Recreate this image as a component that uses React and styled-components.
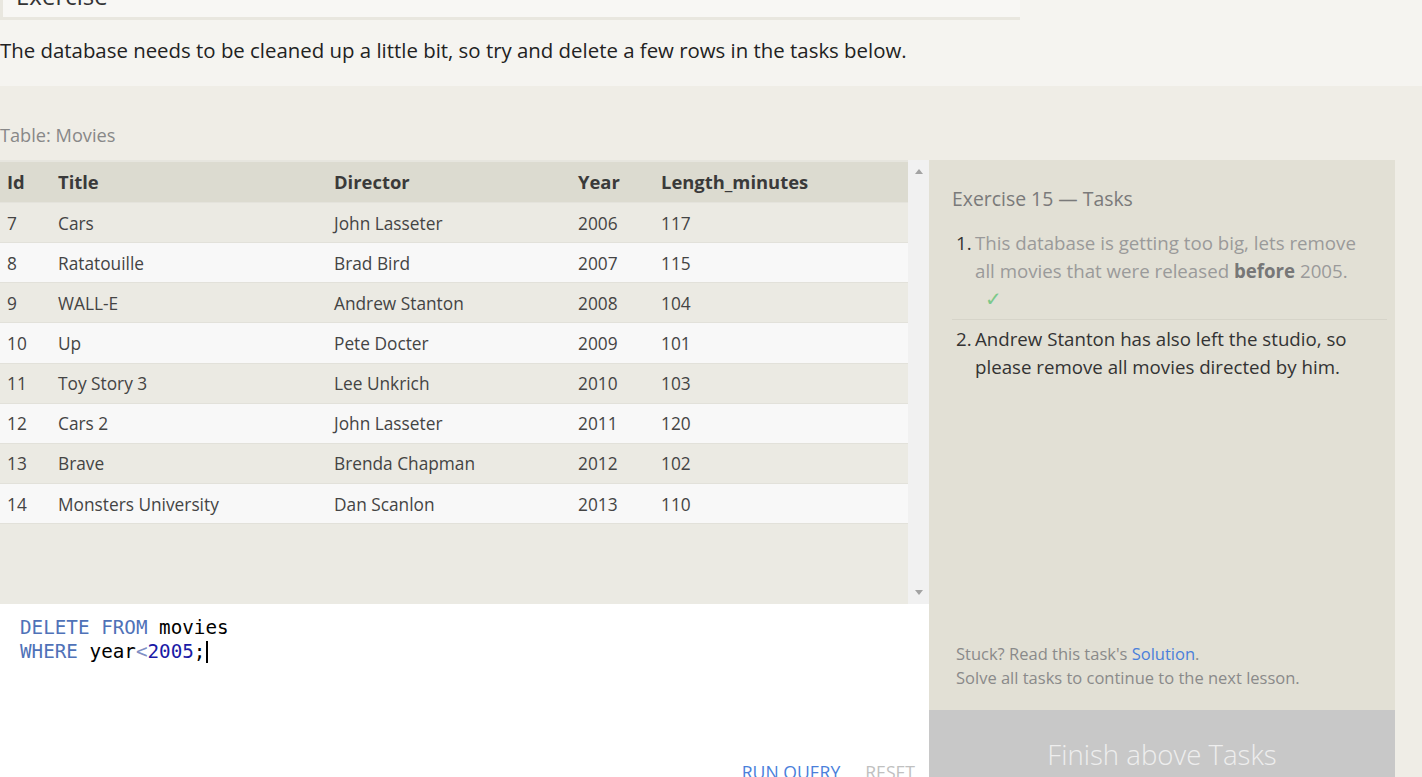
import React from 'react';
import styled, { createGlobalStyle } from 'styled-components';

const GlobalStyle = createGlobalStyle`
  html, body {
    margin: 0;
    padding: 0;
    background: #f5f4f0;
    font-family: "Open Sans", "Noto Sans", sans-serif;
    color: #333;
    overflow: hidden;
  }
`;

const colors = {
  page: '#f5f4f0',
  section: '#efede6',
  header: '#dcdbd0',
  rowOdd: '#ebeae3',
  rowEven: '#f8f8f8',
  panel: '#e2e0d5',
  link: '#4a7fdb',
  muted: '#888',
};

const Page = styled.div`
  width: 1422px;
  height: 777px;
  overflow: hidden;
`;

const ExerciseHeader = styled.div`
  width: 1017px;
  height: 17px;
  overflow: hidden;
  background: #f8f7f4;
  border-left: 3px solid #e9e7df;
  border-bottom: 3px solid #e9e7df;
  display: flex;
  align-items: flex-end;
`;

const ExerciseTitle = styled.h2`
  margin: 0 0 6px 13px;
  font-weight: 400;
  font-size: 24px;
  line-height: 30px;
  color: #333;
`;

const Intro = styled.p`
  margin: 0;
  height: 66px;
  display: flex;
  align-items: center;
  font-size: 20.4px;
  color: #222;
  padding-bottom: 6px;
  box-sizing: border-box;
`;

const Workspace = styled.section`
  background: ${colors.section};
  padding-top: 37px;
`;

const TableLabel = styled.div`
  font-size: 18.2px;
  line-height: 24px;
  color: ${colors.muted};
  margin-bottom: 13px;
`;

const Panels = styled.div`
  display: flex;
  align-items: stretch;
`;

const LeftColumn = styled.div`
  width: 929px;
  display: flex;
  flex-direction: column;
`;

const TableFrame = styled.div`
  height: 444px;
  display: flex;
  background: ${colors.rowOdd};
`;

const Table = styled.table`
  width: 908px;
  height: fit-content;
  border-collapse: collapse;
  border-top: 2px solid #e6e5de;
  font-size: 17.3px;
  color: #444;
`;

const HeadCell = styled.th`
  text-align: left;
  font-weight: 700;
  font-size: 18.4px;
  color: #3a3a3a;
  background: ${colors.header};
  height: 38px;
  padding: 0 0 2px 7px;
  width: ${(p) => p.$w || 'auto'};
  border-bottom: 1px solid #e4e3dc;
`;

const Row = styled.tr`
  background: ${(p) => (p.$even ? colors.rowEven : colors.rowOdd)};
  border-bottom: 1px solid #e2e1da;
`;

const Cell = styled.td`
  height: 38.15px;
  padding: 1px 0 0 7px;
`;

const Scrollbar = styled.div`
  width: 21px;
  background: #f1f1f1;
  display: flex;
  flex-direction: column;
  justify-content: space-between;
  align-items: center;
  padding: 9px 0;
  box-sizing: border-box;
`;

const Arrow = styled.span`
  width: 0;
  height: 0;
  border-left: 4px solid transparent;
  border-right: 4px solid transparent;
  ${(p) =>
    p.$down
      ? 'border-top: 5px solid #a3a3a3;'
      : 'border-bottom: 5px solid #a3a3a3;'}
`;

const Editor = styled.div`
  background: #fff;
  height: 220px;
  display: flex;
  flex-direction: column;
`;

const Code = styled.pre`
  margin: 0;
  padding: 12px 20px 10px;
  height: 130px;
  font-family: "DejaVu Sans Mono", "Liberation Mono", monospace;
  font-size: 19.25px;
  line-height: 24px;
  color: #000;
`;

const Token = styled.span`
  color: ${(p) => p.$c};
`;

const Cursor = styled.span`
  display: inline-block;
  width: 2px;
  height: 22px;
  background: #000;
  vertical-align: -5px;
  margin-left: 1px;
`;

const EditorActions = styled.div`
  display: flex;
  justify-content: flex-end;
  gap: 25px;
  padding-right: 14px;
  margin-top: 4px;
`;

const ActionButton = styled.button`
  border: none;
  background: none;
  padding: 0;
  font-family: "Open Sans", "Noto Sans", sans-serif;
  font-size: 17.6px;
  color: ${(p) => (p.$disabled ? '#c0c0c0' : '#4a7fdb')};
  cursor: pointer;
`;

const TaskPanel = styled.aside`
  width: 466px;
  background: ${colors.panel};
  display: flex;
  flex-direction: column;
`;

const TaskBody = styled.div`
  height: 550px;
  padding: 25px 8px 20px 23px;
  box-sizing: border-box;
  display: flex;
  flex-direction: column;
`;

const TaskTitle = styled.h3`
  margin: 0 0 16px;
  font-weight: 400;
  font-size: 19.4px;
  line-height: 28px;
  color: #7a7a7a;
`;

const TaskList = styled.ol`
  margin: 0;
  padding: 0;
  list-style: none;
`;

const TaskItem = styled.li`
  display: flex;
  gap: 4px;
  font-size: 18.7px;
  line-height: 28px;
  padding-bottom: ${(p) => (p.$done ? '6px' : '0')};
  margin-bottom: 5px;
  border-bottom: ${(p) => (p.$done ? '1px solid #d6d4c9' : 'none')};
  color: ${(p) => (p.$done ? '#9a9a9a' : '#333')};
`;

const TaskNumber = styled.span`
  color: #333;
  width: 15px;
  margin-left: 4px;
  flex-shrink: 0;
`;

const TaskText = styled.div`
  max-width: 400px;

  b {
    color: #777;
  }
`;

const Check = styled.div`
  color: #7cc98a;
  font-size: 20px;
  line-height: 28px;
  padding-left: 10px;
`;

const TaskFooter = styled.div`
  margin-top: auto;
  font-size: 16.5px;
  line-height: 24px;
  color: #8a8a8a;
  padding-left: 4px;

  a {
    color: ${colors.link};
    text-decoration: none;
  }
`;

const FinishButton = styled.button`
  border: none;
  height: 88px;
  background: #c8c8c8;
  color: #eeeeee;
  font-family: "Open Sans", "Noto Sans", sans-serif;
  font-weight: 300;
  font-size: 27.6px;
  padding-bottom: 2px;
`;

const movies = [
  [7, 'Cars', 'John Lasseter', 2006, 117],
  [8, 'Ratatouille', 'Brad Bird', 2007, 115],
  [9, 'WALL-E', 'Andrew Stanton', 2008, 104],
  [10, 'Up', 'Pete Docter', 2009, 101],
  [11, 'Toy Story 3', 'Lee Unkrich', 2010, 103],
  [12, 'Cars 2', 'John Lasseter', 2011, 120],
  [13, 'Brave', 'Brenda Chapman', 2012, 102],
  [14, 'Monsters University', 'Dan Scanlon', 2013, 110],
];

const columns = [
  { label: 'Id', w: '44px' },
  { label: 'Title', w: '269px' },
  { label: 'Director', w: '237px' },
  { label: 'Year', w: '76px' },
  { label: 'Length_minutes' },
];

export default function App() {
  return (
    <Page>
      <GlobalStyle />
      <ExerciseHeader>
        <ExerciseTitle>Exercise</ExerciseTitle>
      </ExerciseHeader>
      <Intro>
        The database needs to be cleaned up a little bit, so try and delete a few rows in the tasks below.
      </Intro>
      <Workspace>
        <TableLabel>Table: Movies</TableLabel>
        <Panels>
          <LeftColumn>
            <TableFrame>
              <Table>
                <thead>
                  <tr>
                    {columns.map((c) => (
                      <HeadCell key={c.label} $w={c.w}>
                        {c.label}
                      </HeadCell>
                    ))}
                  </tr>
                </thead>
                <tbody>
                  {movies.map((m, i) => (
                    <Row key={m[0]} $even={i % 2 === 1}>
                      {m.map((v, j) => (
                        <Cell key={j}>{v}</Cell>
                      ))}
                    </Row>
                  ))}
                </tbody>
              </Table>
              <Scrollbar>
                <Arrow />
                <Arrow $down />
              </Scrollbar>
            </TableFrame>
            <Editor>
              <Code>
                <Token $c="#4f72b8">DELETE FROM</Token> movies
                {'\n'}
                <Token $c="#4f72b8">WHERE</Token> year<Token $c="#7f8fc4">&lt;</Token>
                <Token $c="#1a1aa6">2005</Token>;<Cursor />
              </Code>
              <EditorActions>
                <ActionButton>RUN QUERY</ActionButton>
                <ActionButton $disabled>RESET</ActionButton>
              </EditorActions>
            </Editor>
          </LeftColumn>
          <TaskPanel>
            <TaskBody>
              <TaskTitle>Exercise 15 — Tasks</TaskTitle>
              <TaskList>
                <TaskItem $done>
                  <TaskNumber>1.</TaskNumber>
                  <TaskText>
                    This database is getting too big, lets remove all movies that were released <b>before</b> 2005.
                    <Check>✓</Check>
                  </TaskText>
                </TaskItem>
                <TaskItem>
                  <TaskNumber>2.</TaskNumber>
                  <TaskText>Andrew Stanton has also left the studio, so please remove all movies directed by him.</TaskText>
                </TaskItem>
              </TaskList>
              <TaskFooter>
                Stuck? Read this task's <a href="#solution">Solution</a>.
                <br />
                Solve all tasks to continue to the next lesson.
              </TaskFooter>
            </TaskBody>
            <FinishButton>Finish above Tasks</FinishButton>
          </TaskPanel>
        </Panels>
      </Workspace>
    </Page>
  );
}
